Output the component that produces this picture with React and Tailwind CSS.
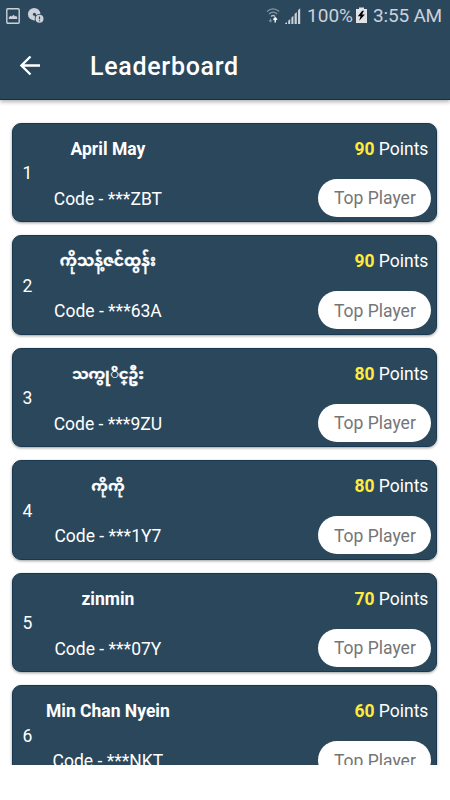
import React from 'react';

const players = [
  { rank: 1, name: 'April May', code: '***ZBT', points: 90 },
  { rank: 2, name: 'ကိုသန့်ဇင်ထွန်း', code: '***63A', points: 90, nameClass: 'text-[15.5px] [-webkit-text-stroke:0.3px_white]' },
  { rank: 3, name: 'သကွုိင္ဦး', code: '***9ZU', points: 80, nameClass: 'text-[15px] tracking-[-0.3px] [-webkit-text-stroke:0.3px_white]' },
  { rank: 4, name: 'ကိုကို', code: '***1Y7', points: 80, nameClass: 'text-[15px] [-webkit-text-stroke:0.3px_white]' },
  { rank: 5, name: 'zinmin', code: '***07Y', points: 70 },
  { rank: 6, name: 'Min Chan Nyein', code: '***NKT', points: 60 },
];

const StatusBar = () => (
  <div className="flex h-[31px] items-center justify-between pl-[6px] pr-[8px] text-[#cbd2da]">
    <div className="flex items-center gap-[8px]">
      <svg width="14" height="16" viewBox="0 0 14 16" fill="none">
        <rect x="0.8" y="0.8" width="12.4" height="14.4" rx="1" stroke="currentColor" strokeWidth="1.4" />
        <path d="M2.8 11V9.3L4.5 7.7L5.7 8.5L7.5 6.7L9 8.5L10 7.8L11.2 9.3V11Z" fill="currentColor" />
      </svg>
      <svg width="16" height="16" viewBox="0 0 16 16">
        <circle cx="6.2" cy="6.2" r="6.2" fill="currentColor" />
        <circle cx="6.4" cy="6.2" r="1.5" fill="#2b475c" />
        <path d="M6.5 6.3L10.5 7.5L7.5 12.5Z" fill="#2b475c" />
        <circle cx="11.5" cy="10.8" r="4.8" fill="#2b475c" />
        <circle cx="11.5" cy="10.8" r="4" fill="currentColor" />
        <path d="M11.5 8.4V11.2M11.5 12.2V13.3" stroke="#2b475c" strokeWidth="1.2" />
      </svg>
    </div>
    <div className="flex items-center">
      <svg width="15" height="17" viewBox="0 0 15 17" fill="none">
        <path d="M1 4.5Q7 -0.8 13.2 4.5" stroke="#8796a3" strokeWidth="1.2" />
        <path d="M3 7Q7 3.4 11.2 7" stroke="#8796a3" strokeWidth="1.2" />
        <path d="M5 9.5Q7 7.5 9.2 9.5" stroke="#b1bbc4" strokeWidth="1.2" />
        <path d="M4.5 11.5V14.5M3 13.2L4.5 15L6 13.2" stroke="#778896" strokeWidth="1.1" />
        <path d="M9.2 15.4V11M7.4 12.7L9.2 10.8L11 12.7" stroke="white" strokeWidth="1.4" />
      </svg>
      <svg className="ml-[4px]" width="16" height="16" viewBox="0 0 16 16" fill="currentColor">
        <path d="M0 15.5L2 14V16H0ZM3.2 12.8L5.2 11V16H3.2ZM6.4 9.5L8.4 7.7V16H6.4ZM9.6 6L11.8 4V16H9.6ZM13 2.2L15.2 0.3V16H13Z" />
      </svg>
      <span className="ml-[6px] w-[45px] whitespace-nowrap text-[19px] leading-[22px]">100%</span>
      <svg className="ml-[4px]" width="11" height="17" viewBox="0 0 11 17">
        <path d="M3 0.5H8V2H11V16H0V2H3Z" fill="#e0e4e8" />
        <path d="M6.2 3.7L1.8 9.3H4.5L3.2 13.7L8.9 7.6H6L8 3.7Z" fill="#050505" />
      </svg>
      <span className="ml-[6px] whitespace-nowrap text-[19px] leading-[22px] tracking-[-0.2px]">3:55 AM</span>
    </div>
  </div>
);

const Header = () => (
  <header className="relative z-10 h-[100px] shrink-0 border-b border-[#123049] bg-[#2b475c] shadow-[0_2px_4px_rgba(0,0,0,0.3)]">
    <StatusBar />
    <div className="flex h-[69px] items-center pl-[20px]">
      <button aria-label="Back" className="text-white">
        <svg width="21" height="20" viewBox="0 0 21 20" fill="none" stroke="currentColor" strokeWidth="2.3">
          <path d="M20 9.5H2M10.5 0.5L1.5 9.5L10.5 18.5" />
        </svg>
      </button>
      <h1 className="ml-[49px] pt-[2px] text-[25px] font-medium leading-[32px] tracking-[0.7px] text-white">Leaderboard</h1>
    </div>
  </header>
);

const PlayerCard = ({ player }) => (
  <li className="flex h-[99.5px] shrink-0 items-center rounded-[9px] border border-[#193850] bg-[#2b475c] text-white shadow-[0_1px_3px_rgba(0,0,0,0.4)]">
    <div className="w-[28px] pt-[2px] text-center text-[17.5px]">{player.rank}</div>
    <div className="flex h-full w-[133px] flex-col items-center whitespace-nowrap pt-[13px] text-[17.5px] leading-[24px]">
      <p className={`h-[24px] font-bold ${player.nameClass || ''}`}>{player.name}</p>
      <p className="mt-[26px]">Code - {player.code}</p>
    </div>
    <div className="ml-auto flex h-full flex-col items-end pr-[5px] pt-[13px] text-[17.5px] leading-[24px]">
      <p className="pr-[3px]">
        <span className="font-bold text-[#ffeb3b]">{player.points}</span> Points
      </p>
      <span className="mt-[18px] flex h-[38px] w-[113px] items-center justify-center rounded-full bg-white pt-[1px] text-[#757575]">
        Top Player
      </span>
    </div>
  </li>
);

const App = () => {
  return (
    <div className="h-[800px] w-[450px] overflow-hidden bg-white font-[Roboto,'Noto_Sans_Myanmar','Noto_Sans',sans-serif]">
      <div className="flex h-[765px] flex-col overflow-hidden">
        <Header />
        <ul className="flex flex-col gap-[13px] pl-[12.4px] pr-[12.6px] pt-[22.5px]">
          {players.map((player) => (
            <PlayerCard key={player.rank} player={player} />
          ))}
        </ul>
      </div>
    </div>
  );
};

export default App;
